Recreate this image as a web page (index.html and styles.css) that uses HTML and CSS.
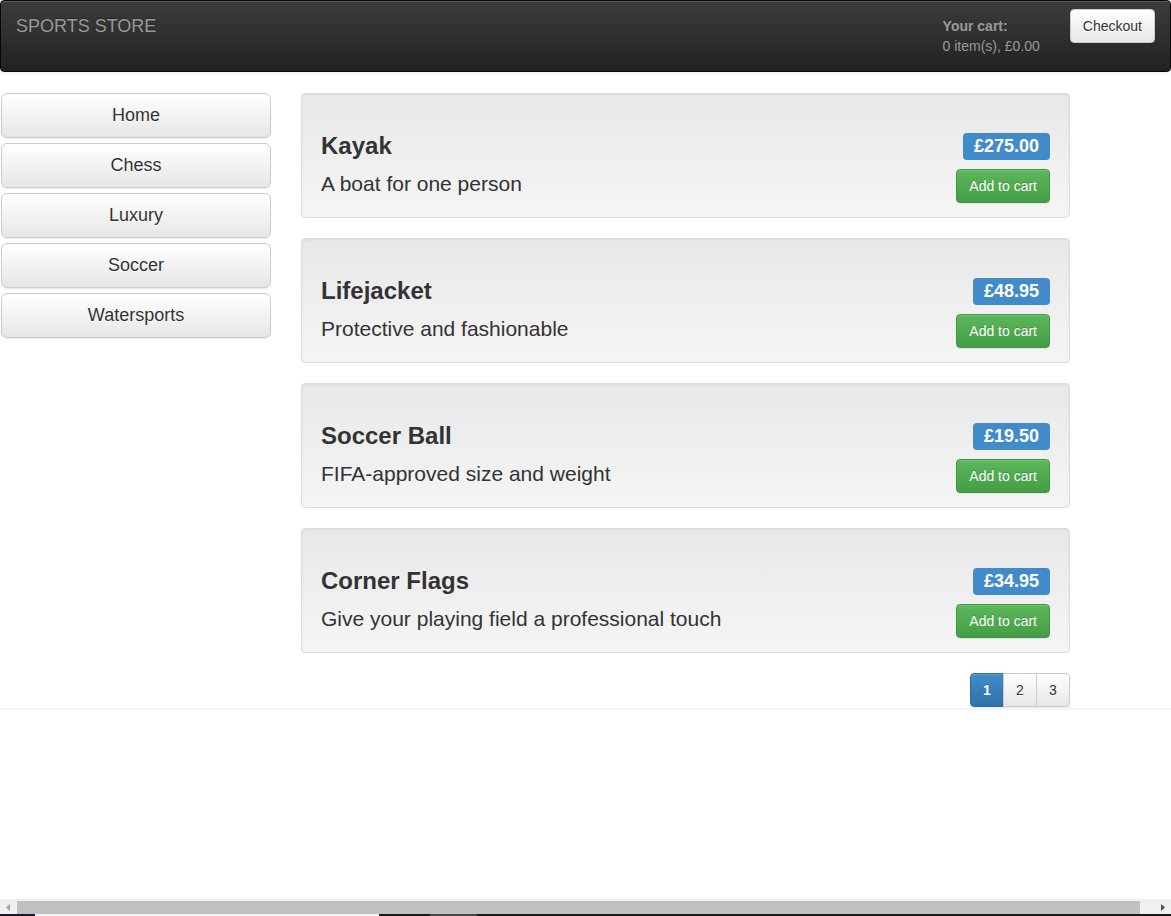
FILE: index.html
```html
<!DOCTYPE html>
<html lang="en">
<head>
<meta charset="utf-8">
<title>Sports Store</title>
<link rel="stylesheet" href="styles.css">
</head>
<body>
<header class="navbar">
  <a class="brand" href="#">SPORTS STORE</a>
  <div class="cart"><b>Your cart:</b><span>0 item(s), £0.00</span></div>
  <button class="btn btn-default" type="button">Checkout</button>
</header>
<div class="content">
  <nav class="categories" aria-label="Categories">
    <a class="category" href="#">Home</a>
    <a class="category" href="#">Chess</a>
    <a class="category" href="#">Luxury</a>
    <a class="category" href="#">Soccer</a>
    <a class="category" href="#">Watersports</a>
  </nav>
  <main class="products">
    <article class="product">
      <div class="info"><h3>Kayak</h3><p>A boat for one person</p></div>
      <div class="buy"><span class="price">£275.00</span><button class="btn btn-success" type="button">Add to cart</button></div>
    </article>
    <article class="product">
      <div class="info"><h3>Lifejacket</h3><p>Protective and fashionable</p></div>
      <div class="buy"><span class="price">£48.95</span><button class="btn btn-success" type="button">Add to cart</button></div>
    </article>
    <article class="product">
      <div class="info"><h3>Soccer Ball</h3><p>FIFA-approved size and weight</p></div>
      <div class="buy"><span class="price">£19.50</span><button class="btn btn-success" type="button">Add to cart</button></div>
    </article>
    <article class="product">
      <div class="info"><h3>Corner Flags</h3><p>Give your playing field a professional touch</p></div>
      <div class="buy"><span class="price">£34.95</span><button class="btn btn-success" type="button">Add to cart</button></div>
    </article>
    <nav class="pager" aria-label="Pages">
      <a class="page selected" href="#" aria-current="page">1</a>
      <a class="page" href="#">2</a>
      <a class="page" href="#">3</a>
    </nav>
  </main>
</div>
<hr class="divider">
<div class="scrollbar" aria-hidden="true">
  <svg class="arrow" width="17" height="13" viewBox="0 0 17 13"><path d="M10 3v7L6 6.500z" fill="#a3a3a3"/></svg>
  <div class="thumb"></div>
  <svg class="arrow arrow-right" width="31" height="13" viewBox="0 0 31 13"><path d="M21 3v7l4-3.500z" fill="#505050"/></svg>
</div>
<div class="strip" aria-hidden="true"><i class="strip-start"></i><i class="strip-window"></i><i class="strip-gap"></i><i class="strip-app"></i></div>
</body>
</html>
```
FILE: styles.css
```css
* { box-sizing: border-box; }
body {
  margin: 0;
  min-height: 100vh;
  display: flex;
  flex-direction: column;
  background: #fff;
  color: #333;
  font: 14px/20px "Liberation Sans", Arial, sans-serif;
}
a { color: inherit; text-decoration: none; }
.navbar {
  display: flex;
  align-items: flex-start;
  height: 72px;
  padding: 8px 15px;
  border: 1px solid #080808;
  border-radius: 4px;
  background: linear-gradient(#3c3c3c, #222);
  box-shadow: inset 0 1px 0 rgba(255,255,255,.15), 0 1px 5px rgba(0,0,0,.075);
  color: #999;
}
.brand { padding-top: 7px; font-size: 18px; text-shadow: 0 -1px 0 rgba(0,0,0,.25); }
.cart { display: flex; flex-direction: column; margin-left: auto; margin-right: 30px; padding-top: 7px; }
.btn {
  height: 34px;
  padding: 6px 12px;
  border: 1px solid #ccc;
  border-radius: 4px;
  font: inherit;
  white-space: nowrap;
}
.btn-default, .category, .page {
  border: 1px solid #ccc;
  background: linear-gradient(#fff, #e6e6e6);
  color: #333;
  text-shadow: 0 1px 0 #fff;
  box-shadow: inset 0 1px 0 rgba(255,255,255,.15), 0 1px 1px rgba(0,0,0,.075);
}
.btn-success {
  border-color: #419641;
  background: linear-gradient(#5cb85c, #449d44);
  color: #fff;
  text-shadow: 0 -1px 0 rgba(0,0,0,.2);
  box-shadow: inset 0 1px 0 rgba(255,255,255,.15), 0 1px 1px rgba(0,0,0,.075);
}
.content { display: flex; gap: 30px; padding: 21px 101px 0 1px; }
.categories { flex: 0 0 270px; display: flex; flex-direction: column; gap: 5px; }
.category {
  padding: 10px 16px;
  border-radius: 6px;
  font-size: 18px;
  line-height: 23px;
  text-align: center;
}
.products { flex: 1; display: flex; flex-direction: column; gap: 20px; }
.product {
  display: flex;
  justify-content: space-between;
  padding: 39px 19px 14px;
  border: 1px solid #dcdcdc;
  border-radius: 4px;
  background: linear-gradient(#e8e8e8, #f5f5f5);
  box-shadow: inset 0 1px 3px rgba(0,0,0,.05), 0 1px 0 rgba(255,255,255,.1);
}
.info h3 { margin: 0; font-size: 24px; line-height: 26px; }
.info p { margin: 10px 0 0; font-size: 21px; line-height: 30px; }
.buy { display: flex; flex-direction: column; align-items: flex-end; gap: 9px; }
.price {
  padding: 3px 11px 4px;
  border-radius: 4px;
  background: #428bca;
  color: #fff;
  font-size: 18px;
  font-weight: bold;
}
.pager { display: flex; align-self: flex-end; }
.page { min-width: 34px; height: 34px; padding: 6px 12px; text-align: center; }
.page + .page { margin-left: -1px; }
.page:last-child { border-radius: 0 4px 4px 0; }
.selected {
  border-color: #2d6ca2;
  border-radius: 4px 0 0 4px;
  background: linear-gradient(#428bca, #3071a9);
  color: #fff;
  font-weight: bold;
  text-shadow: 0 -1px 0 rgba(0,0,0,.2);
}
.divider { width: 100%; margin: 1px 0 0; border: 0; border-top: 2px solid #f4f4f4; }
.scrollbar { display: flex; height: 15px; margin-top: auto; padding-top: 2px; background: #f0f0f0; }
.arrow { flex: none; }
.thumb { flex: 1; background: #c1c1c1; }
.strip { display: flex; height: 2px; background: #1b191b; }
.strip-start { width: 35px; background: #191a28; }
.strip-window { width: 344px; background: #f5f5f5; }
.strip-gap { width: 51px; }
.strip-app { width: 47px; background: #484648; }
```
